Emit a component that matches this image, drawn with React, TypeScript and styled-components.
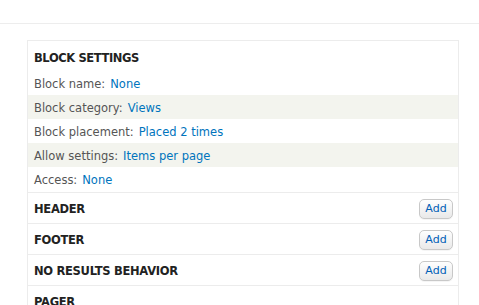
import * as React from 'react'
import styled, {createGlobalStyle} from 'styled-components'

const Global = createGlobalStyle`
  body{
    margin:0;
    background:#fff;
    font-family:"DejaVu Sans", Verdana, sans-serif;
  }
`

const TopBar = styled.div`
  height:23px;
  border-bottom:1px solid #ededed;
`

const Main = styled.div`
  padding:16px 20px 0 27px;
`

const Panel = styled.div`
  width:430px;
  border:1px solid #ececec;
  border-bottom:none;
`

const Title = styled.h3`
  margin:0;
  height:30px;
  padding:3px 6px 0;
  display:flex;
  align-items:center;
  box-sizing:border-box;
  font-size:11.5px;
  font-weight:bold;
  color:#222;
  letter-spacing:-0.4px;
`

const Row = styled.div<{$striped?:boolean}>`
  height:24px;
  display:flex;
  align-items:center;
  padding:1px 6px 0;
  box-sizing:border-box;
  background:${p=>p.$striped?'#f3f4ee':'#fff'};
  font-size:11.5px;
`

const Label = styled.span`
  color:#555;
  margin-right:5px;
`

const Value = styled.a`
  color:#0074bd;
  text-decoration:none;
`

const Section = styled.div`
  height:31px;
  box-sizing:border-box;
  border-top:1px solid #ececec;
  display:flex;
  align-items:center;
  justify-content:space-between;
  padding:1px 5px 0 6px;
  font-size:11.5px;
  font-weight:bold;
  color:#222;
  letter-spacing:-0.3px;
  &:first-of-type{
    margin-top:1px;
  }
`

const AddButton = styled.button`
  width:34px;
  height:20px;
  padding:0;
  border:1px solid #c8c8c8;
  border-radius:5px;
  background:linear-gradient(#fefefe,#e9e9e9);
  color:#0060b6;
  font-family:"DejaVu Sans", Verdana, sans-serif;
  font-size:11px;
  letter-spacing:0;
  box-shadow:0 1px 0 rgba(0,0,0,0.04);
`

const settings=[
  {label:'Block name:',value:'None'},
  {label:'Block category:',value:'Views'},
  {label:'Block placement:',value:'Placed 2 times'},
  {label:'Allow settings:',value:'Items per page'},
  {label:'Access:',value:'None'},
]

const sections=[
  {name:'HEADER',add:true},
  {name:'FOOTER',add:true},
  {name:'NO RESULTS BEHAVIOR',add:true},
  {name:'PAGER',add:false},
]

export default function App(){
  return(
    <>
      <Global/>
      <TopBar/>
      <Main>
        <Panel>
          <Title>BLOCK SETTINGS</Title>
          {settings.map((s,i)=>(
            <Row key={s.label} $striped={i%2===1}>
              <Label>{s.label}</Label>
              <Value href="#">{s.value}</Value>
            </Row>
          ))}
          <div>
            {sections.map(s=>(
              <Section key={s.name}>
                <span>{s.name}</span>
                {s.add && <AddButton>Add</AddButton>}
              </Section>
            ))}
          </div>
        </Panel>
      </Main>
    </>
  )
}
